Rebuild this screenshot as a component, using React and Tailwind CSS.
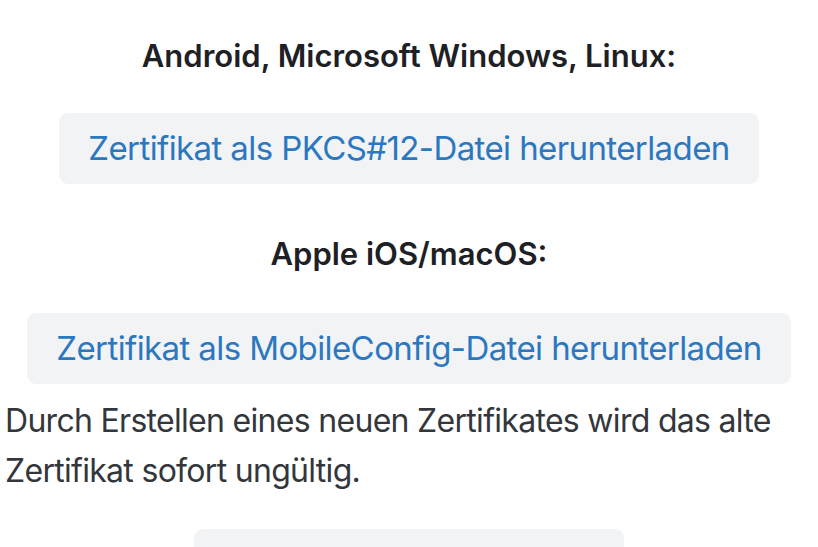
import React from 'react'

const font = { fontFamily: 'Inter, "Noto Sans", sans-serif' }

function DownloadButton({ children }) {
  return (
    <button className="h-[71px] px-[29px] rounded-[9px] bg-[#f2f3f5] text-[#2b78c0] text-[33px] tracking-[-0.6px] leading-none whitespace-nowrap">
      {children}
    </button>
  )
}

export default function App() {
  return (
    <div className="min-h-screen bg-white overflow-hidden px-[5px] pt-[32px]" style={font}>
      <div className="flex flex-col items-center">
        <h2 className="text-[31px] leading-[48px] font-semibold text-[#1d2024]">
          Android, Microsoft Windows, Linux:
        </h2>
        <div className="mt-[33px]">
          <DownloadButton>Zertifikat als PKCS#12-Datei herunterladen</DownloadButton>
        </div>
        <h2 className="mt-[46px] text-[31px] leading-[48px] font-semibold text-[#1d2024]">
          Apple iOS/macOS:
        </h2>
        <div className="mt-[35px]">
          <DownloadButton>Zertifikat als MobileConfig-Datei herunterladen</DownloadButton>
        </div>
      </div>

      <p className="mt-[12px] text-[32px] tracking-[-0.7px] leading-[50px] text-[#33373c]">
        Durch Erstellen eines neuen Zertifikates wird das alte Zertifikat sofort ungültig.
      </p>

      <div className="mt-[33px] flex justify-center">
        <button className="w-[430px] h-[71px] rounded-[9px] bg-[#f2f3f5] text-[#2b78c0] text-[33px] tracking-[-0.6px]">
          Neues Zertifikat erstellen
        </button>
      </div>
    </div>
  )
}
